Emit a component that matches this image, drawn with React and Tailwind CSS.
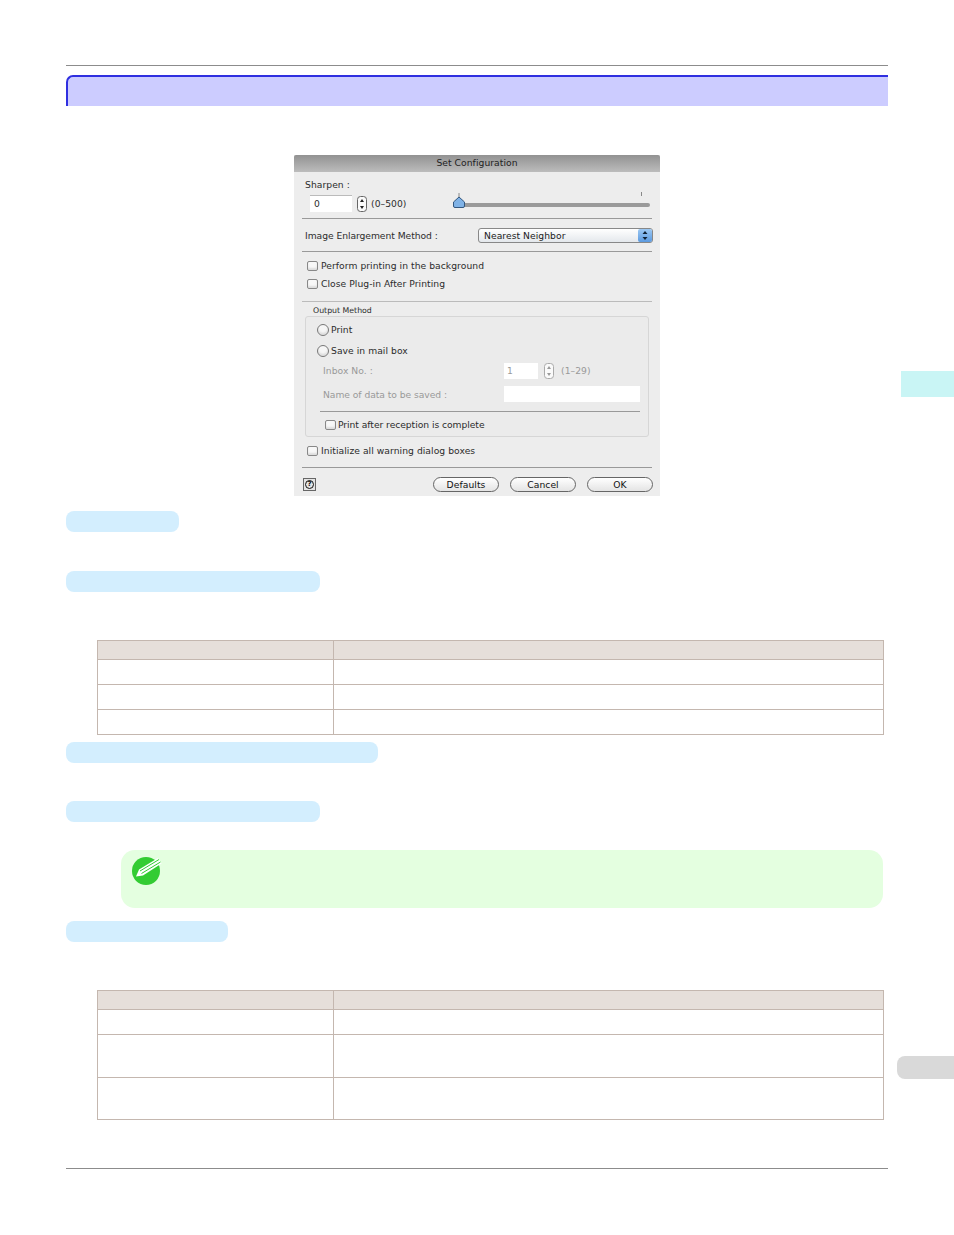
function Pill({ width }) {
  return <div className="h-[21px] rounded-[8px] bg-[#d3eefe]" style={{ width }} />
}

function Stepper({ muted }) {
  const color = muted ? '#999' : '#222'
  return (
    <svg width="10" height="16" viewBox="0 0 10 16" className="shrink-0">
      <rect x="0.5" y="0.5" width="9" height="15" rx="3" fill="#fafafa" stroke={muted ? '#aaa' : '#666'} />
      <path d="M5 3 7 6H3z" fill={color} />
      <path d="M5 13 7 10H3z" fill={color} />
    </svg>
  )
}

function Check({ label, gap = 'ml-[3px]', className = '' }) {
  return (
    <div className={`flex items-center ${className}`}>
      <span className="w-[11px] h-[10px] rounded-[2px] border border-[#888] bg-[#f8f8f8] shadow-[inset_0_-2px_2px_#ddd] shrink-0" />
      <span className={gap}>{label}</span>
    </div>
  )
}

function Radio({ label, className = '' }) {
  return (
    <div className={`flex items-center ${className}`}>
      <span className="w-[12px] h-[12px] rounded-full border border-[#777] bg-[#f6f6f6] shadow-[inset_0_-2px_2px_#ddd] shrink-0" />
      <span className="ml-[2px]">{label}</span>
    </div>
  )
}

function Btn({ label }) {
  return (
    <div className="w-[66px] h-[15px] rounded-full border border-[#666] bg-gradient-to-b from-white to-[#e4e4e4] flex items-center justify-center text-[#111]">
      {label}
    </div>
  )
}

function Dialog() {
  return (
    <div className="w-[366px] h-[341px] ml-[228px] bg-[#ededed] text-[9.2px] leading-[12px] text-[#2c2c2c] font-['DejaVu_Sans',sans-serif] tracking-[0.05px] flex flex-col">
      <div className="h-[17px] shrink-0 rounded-t-[2px] bg-gradient-to-b from-[#929292] to-[#bcbcbc] text-center text-[#222] leading-[16px]">
        Set Configuration
      </div>

      <div className="pl-[11px] mt-[7px] h-[12px]">Sharpen :</div>
      <div className="flex items-center h-[17px] mt-[4px] pl-[16px] pr-[10px]">
        <div className="w-[42px] h-[17px] bg-white border-t border-[#bbb] pl-[4px] leading-[15px]">0</div>
        <div className="ml-[5px]"><Stepper /></div>
        <span className="ml-[4px] w-[82px]">(0–500)</span>
        <div className="relative flex-1 h-[17px]">
          <div className="absolute left-0 right-0 top-[8px] h-[4px] rounded-full bg-[#9a9a9a]" />
          <div className="absolute right-[8px] top-[-3px] w-px h-[4px] bg-[#888]" />
          <svg width="13" height="17" viewBox="0 0 13 17" className="absolute left-0 top-[-2px]">
            <path d="M6 0v4" stroke="#888" strokeWidth="1" />
            <path d="M6 4 11.5 9v4q0 1.5-1.5 1.5H2q-1.5 0-1.5-1.5V9z" fill="#7fb2e6" stroke="#33577f" strokeWidth="1" />
          </svg>
        </div>
      </div>
      <div className="h-px bg-[#999] mx-[8px] mt-[6px]" />

      <div className="flex items-center justify-between h-[15px] mt-[9px] pl-[11px] pr-[7px]">
        <span className="tracking-[-0.05px]">Image Enlargement Method :</span>
        <div className="w-[175px] h-[15px] rounded-[3px] border border-[#888] bg-gradient-to-b from-white to-[#e4e8ec] flex items-center justify-between pl-[5px]">
          <span className="text-[#222]">Nearest Neighbor</span>
          <svg width="14" height="13" viewBox="0 0 14 13" className="shrink-0">
            <defs>
              <linearGradient id="selectBlue" x1="0" y1="0" x2="0" y2="1">
                <stop offset="0" stopColor="#9cc8f2" />
                <stop offset="1" stopColor="#5c9ae0" />
              </linearGradient>
            </defs>
            <rect width="14" height="13" rx="2" fill="url(#selectBlue)" />
            <path d="M7 2 9.5 5h-5zM7 11 9.5 8h-5z" fill="#123" />
          </svg>
        </div>
      </div>
      <div className="h-px bg-[#999] mx-[8px] mt-[8px]" />

      <Check label="Perform printing in the background" className="ml-[13px] mt-[8px] h-[12px]" />
      <Check label="Close Plug-in After Printing" className="ml-[13px] mt-[6px] h-[12px]" />
      <div className="h-px bg-[#bbb] mx-[8px] mt-[11px]" />

      <div className="ml-[19px] mt-[4px] h-[9px] text-[7.8px] leading-[9px] tracking-normal">Output Method</div>
      <div className="mx-[11px] mt-[1px] h-[121px] border border-[#d6d6d6] rounded-[3px] bg-[#ebebeb] pl-[11px] pr-[8px] flex flex-col">
        <Radio label="Print" className="mt-[7px] h-[12px]" />
        <Radio label="Save in mail box" className="mt-[9px] h-[12px]" />
        <div className="flex items-center h-[16px] mt-[6px] text-[#999]">
          <span className="ml-[6px] w-[181px]">Inbox No. :</span>
          <div className="w-[34px] h-[16px] bg-white pl-[3px] leading-[15px]">1</div>
          <div className="ml-[6px]"><Stepper muted /></div>
          <span className="ml-[7px]">(1–29)</span>
        </div>
        <div className="flex items-center h-[16px] mt-[7px] text-[#999]">
          <span className="ml-[6px] w-[181px] pt-px tracking-[-0.05px]">Name of data to be saved :</span>
          <div className="w-[136px] h-[16px] bg-white" />
        </div>
        <div className="h-px bg-[#999] ml-[3px] mr-0 mt-[9px]" />
        <Check label="Print after reception is complete" gap="ml-[2px] tracking-[-0.05px]" className="ml-[8px] mt-[7px] h-[12px]" />
      </div>

      <Check label="Initialize all warning dialog boxes" className="ml-[13px] mt-[8px] h-[12px]" />
      <div className="h-px bg-[#999] mx-[8px] mt-[10px]" />

      <div className="flex items-center justify-between h-[15px] mt-[9px] pl-[9px] pr-[7px]">
        <div className="w-[13px] h-[13px] border border-[#666] bg-[#e4e4e4] flex items-center justify-center">
          <span className="w-[9px] h-[9px] rounded-full border border-[#111] text-[7px] leading-[7px] text-center font-bold text-[#111]">?</span>
        </div>
        <div className="flex gap-[11px]">
          <Btn label="Defaults" />
          <Btn label="Cancel" />
          <Btn label="OK" />
        </div>
      </div>
    </div>
  )
}

function Table({ rows }) {
  const cell = 'border-[#c4b7af]'
  return (
    <div className="ml-[31px] mr-[4px] border border-[#c4b7af]">
      <div className={`flex h-[19px] bg-[#e6dfda] border-b ${cell}`}>
        <div className={`w-[236px] border-r ${cell}`} />
      </div>
      {rows.map((h, i) => (
        <div key={i} className={`flex ${i < rows.length - 1 ? `border-b ${cell}` : ''}`} style={{ height: h }}>
          <div className={`w-[236px] border-r ${cell}`} />
        </div>
      ))}
    </div>
  )
}

export default function App() {
  return (
    <div className="relative w-[954px] h-[1235px] bg-white overflow-hidden">
      <div className="ml-[66px] w-[822px] pt-[65px]">
        <div className="h-px bg-[#8c8c8c]" />
        <div className="h-[31px] mt-[9px] bg-[#ccccff] border-t-2 border-l-2 border-[#2f2fe0] rounded-tl-[7px]" />

        <div className="mt-[49px]"><Dialog /></div>

        <div className="mt-[15px]"><Pill width={113} /></div>
        <div className="mt-[39px]"><Pill width={254} /></div>

        <div className="mt-[48px]"><Table rows={[25, 25, 24]} /></div>

        <div className="mt-[7px]"><Pill width={312} /></div>
        <div className="mt-[38px]"><Pill width={254} /></div>

        <div className="relative mt-[28px] ml-[55px] mr-[5px] h-[58px] rounded-[14px] bg-[#e4ffe0]">
          <svg width="32" height="30" viewBox="0 0 32 30" className="absolute left-[10px] top-[6px]">
            <circle cx="15" cy="15" r="14" fill="#33cc33" />
            <path d="M5 20.5 8 13.5 27 2l3.5 5.5L12 19.5z" fill="#fff" />
            <path d="M9 15 28 3.5M10.5 17.5 29.5 6" stroke="#33cc33" strokeWidth="1" />
          </svg>
        </div>

        <div className="mt-[13px]"><Pill width={162} /></div>

        <div className="mt-[48px]"><Table rows={[25, 43, 41]} /></div>

        <div className="h-px bg-[#8c8c8c] mt-[48px]" />
      </div>

      <div className="absolute right-0 top-[371px] w-[53px] h-[26px] bg-[#c9f5f5]" />
      <div className="absolute right-0 top-[1056px] w-[57px] h-[23px] bg-[#d9d9d9] rounded-l-[8px]" />
    </div>
  )
}
